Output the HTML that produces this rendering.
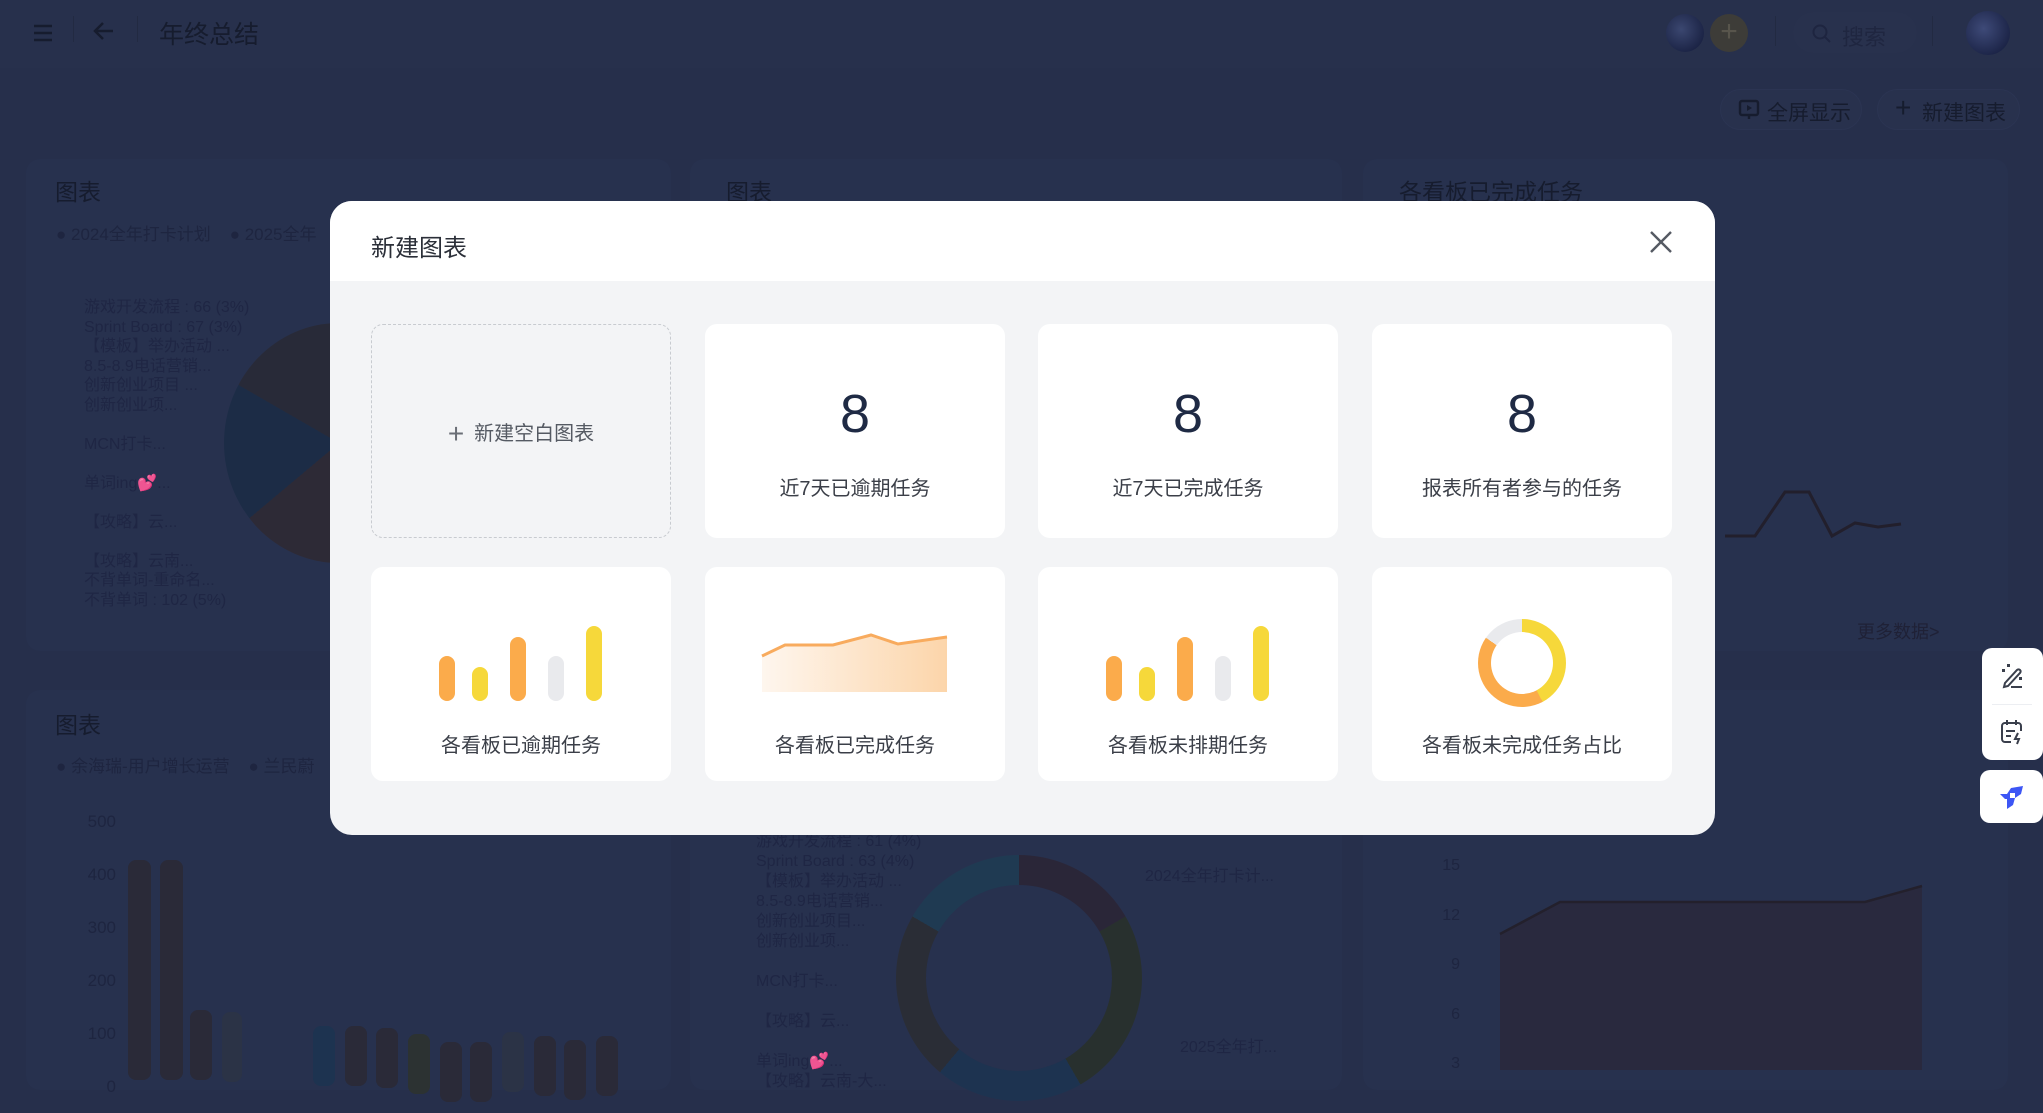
<!DOCTYPE html>
<html><head><meta charset="utf-8">
<style>
*{margin:0;padding:0;box-sizing:border-box}
body{width:2043px;height:1069px;overflow:hidden;background:#262f4b;font-family:"Liberation Sans","Noto Sans CJK SC",sans-serif;position:relative}
.a{position:absolute}
.top{left:0;top:0;width:2043px;height:68px;background:#27304c}
.dk{color:#1a2136}
.panel{background:#27314e;border-radius:14px}
.modal{left:330px;top:201px;width:1385px;height:634px;border-radius:22px;background:#f3f4f6;overflow:hidden}
.mh{left:0;top:0;width:1385px;height:80px;background:#fff}
.card{width:300px;height:214px;background:#fff;border-radius:12px}
.num{width:300px;text-align:center;top:58px;font-size:54px;color:#1f2a44;line-height:64px}
.lbl{width:300px;text-align:center;font-size:20px;color:#3b3f48;line-height:24px}
</style></head><body>
<div class="a top"></div>
<!-- topbar -->
<svg class="a" style="left:32px;top:22px" width="24" height="22"><g stroke="#161c2e" stroke-width="2.5"><line x1="2" y1="4" x2="20" y2="4"/><line x1="2" y1="11" x2="20" y2="11"/><line x1="2" y1="18" x2="20" y2="18"/></g></svg>
<div class="a" style="left:73px;top:16px;width:1px;height:26px;background:#222a42"></div>
<svg class="a" style="left:92px;top:20px" width="24" height="22"><g stroke="#161c2e" stroke-width="2.5" fill="none"><line x1="3" y1="11" x2="21" y2="11"/><polyline points="11,3 3,11 11,19"/></g></svg>
<div class="a" style="left:137px;top:16px;width:1px;height:26px;background:#222a42"></div>
<div class="a dk" style="left:159px;top:15px;font-size:25px;color:#161c2e">年终总结</div>
<div class="a" style="left:1666px;top:14px;width:38px;height:38px;border-radius:50%;background:radial-gradient(circle at 40% 40%,#3b4770,#101736)"></div>
<div class="a" style="left:1710px;top:14px;width:38px;height:38px;border-radius:50%;background:#3d3c38;color:#58554c;text-align:center;font-size:30px;line-height:36px">+</div>
<div class="a" style="left:1775px;top:16px;width:1px;height:30px;background:#222a42"></div>
<div class="a" style="left:1793px;top:12px;width:124px;height:41px;border-radius:21px;background:#28314d"></div>
<svg class="a" style="left:1812px;top:24px" width="20" height="20"><circle cx="8" cy="8" r="6.5" stroke="#1e2540" stroke-width="2" fill="none"/><line x1="13" y1="13" x2="18" y2="18" stroke="#1e2540" stroke-width="2"/></svg>
<div class="a" style="left:1842px;top:20px;font-size:22px;color:#1f2640">搜索</div>
<div class="a" style="left:1932px;top:16px;width:1px;height:30px;background:#222a42"></div>
<div class="a" style="left:1966px;top:11px;width:44px;height:44px;border-radius:50%;background:radial-gradient(circle at 40% 40%,#3e4a78,#101736)"></div>
<div class="a" style="left:1720px;top:89px;width:142px;height:41px;border-radius:21px;background:#28314d;border:1px solid #2b3452"></div>
<svg class="a" style="left:1738px;top:99px" width="22" height="22"><rect x="2" y="2" width="18" height="14" rx="2" stroke="#161c2e" stroke-width="2.4" fill="none"/><path d="M9 6 L14 9 L9 12Z" fill="#161c2e"/><line x1="11" y1="16" x2="11" y2="20" stroke="#161c2e" stroke-width="2.4"/></svg>
<div class="a" style="left:1767px;top:97px;font-size:21px;color:#161c2e">全屏显示</div>
<div class="a" style="left:1877px;top:89px;width:143px;height:41px;border-radius:21px;background:#28314d;border:1px solid #2b3452"></div>
<div class="a" style="left:1895px;top:92px;font-size:28px;color:#161c2e">+</div>
<div class="a" style="left:1922px;top:97px;font-size:21px;color:#161c2e">新建图表</div>
<!-- panels -->
<div class="a panel" style="left:26px;top:159px;width:645px;height:492px"></div>
<div class="a panel" style="left:690px;top:159px;width:652px;height:492px"></div>
<div class="a panel" style="left:1363px;top:159px;width:645px;height:492px"></div>
<div class="a panel" style="left:26px;top:690px;width:645px;height:400px"></div>
<div class="a panel" style="left:690px;top:690px;width:652px;height:400px"></div>
<div class="a panel" style="left:1363px;top:690px;width:645px;height:400px"></div>
<div class="a" style="left:55px;top:173px;font-size:23px;color:#161c2e">图表</div>
<div class="a" style="left:726px;top:173px;font-size:23px;color:#161c2e">图表</div>
<div class="a" style="left:1399px;top:173px;font-size:23px;color:#161c2e">各看板已完成任务</div>
<div class="a" style="left:55px;top:706px;font-size:23px;color:#161c2e">图表</div>
<div class="a" style="left:56px;top:220px;font-size:17px;color:#1e2540">● 2024全年打卡计划 &nbsp;&nbsp; ● 2025全年</div>
<div class="a" style="left:56px;top:752px;font-size:17px;color:#1e2540">● 余海瑞-用户增长运营 &nbsp;&nbsp; ● 兰民蔚</div>
<div class="a" style="left:84px;top:298px;font-size:16px;line-height:19.5px;color:#1f2644">游戏开发流程 : 66 (3%)<br>Sprint Board : 67 (3%)<br>【模板】举办活动 ...<br>8.5-8.9电话营销...<br>创新创业项目 ...<br>创新创业项...<br><br>MCN打卡...<br><br>单词ing💕...<br><br>【攻略】云...<br><br>【攻略】云南...<br>不背单词-重命名...<br>不背单词 : 102 (5%)</div>
<div class="a" style="left:224px;top:323px;width:230px;height:240px;border-radius:50%;background:conic-gradient(#1e2a42 0 40deg,#2b2436 40deg 80deg,#2a2438 80deg 110deg,#1f3350 110deg 150deg,#2e3a30 150deg 180deg,#2d2a36 180deg 230deg,#1c2c46 230deg 300deg,#282a38 300deg 360deg)"></div>
<!-- bottom-left bars -->
<div class="a" style="left:82px;top:795px;font-size:17px;line-height:53px;color:#1e2540;text-align:right;width:34px">500<br>400<br>300<br>200<br>100<br>0</div>
<div class="a" style="left:128px;top:860px;width:23px;height:220px;background:#2a2a38;border-radius:8px"></div>
<div class="a" style="left:160px;top:860px;width:23px;height:220px;background:#2a2a38;border-radius:8px"></div>
<div class="a" style="left:190px;top:1010px;width:22px;height:70px;background:#2a2a38;border-radius:8px"></div>
<div class="a" style="left:222px;top:1012px;width:20px;height:70px;background:#2b3346;border-radius:8px"></div>
<div class="a" style="left:313px;top:1026px;width:22px;height:60px;background:#1d3350;border-radius:8px"></div>
<div class="a" style="left:345px;top:1026px;width:22px;height:60px;background:#2a2a38;border-radius:8px"></div>
<div class="a" style="left:376px;top:1028px;width:22px;height:60px;background:#2a2a38;border-radius:8px"></div>
<div class="a" style="left:408px;top:1034px;width:22px;height:60px;background:#2c3232;border-radius:8px"></div>
<div class="a" style="left:440px;top:1042px;width:22px;height:60px;background:#2a2a38;border-radius:8px"></div>
<div class="a" style="left:470px;top:1042px;width:22px;height:60px;background:#2a2a38;border-radius:8px"></div>
<div class="a" style="left:502px;top:1032px;width:22px;height:60px;background:#2b3346;border-radius:8px"></div>
<div class="a" style="left:534px;top:1036px;width:22px;height:60px;background:#2a2a38;border-radius:8px"></div>
<div class="a" style="left:564px;top:1040px;width:22px;height:60px;background:#2a2a38;border-radius:8px"></div>
<div class="a" style="left:596px;top:1036px;width:22px;height:60px;background:#2a2a38;border-radius:8px"></div>
<!-- bottom-middle donut -->
<div class="a" style="left:896px;top:855px;width:246px;height:246px;border-radius:50%;background:conic-gradient(#2a2638 0 60deg,#28302e 60deg 150deg,#1d3350 150deg 220deg,#2a2d36 220deg 300deg,#1f3a52 300deg 360deg)"></div>
<div class="a" style="left:926px;top:885px;width:186px;height:186px;border-radius:50%;background:#27314e"></div>
<div class="a" style="left:756px;top:832px;font-size:16px;line-height:20px;color:#1f2644">游戏开发流程 : 61 (4%)<br>Sprint Board : 63 (4%)<br>【模板】举办活动 ...<br>8.5-8.9电话营销...<br>创新创业项目...<br>创新创业项...<br><br>MCN打卡...<br><br>【攻略】云...<br><br>单词ing💕...<br>【攻略】云南-大...</div>
<div class="a" style="left:1145px;top:862px;font-size:16px;color:#1f2644">2024全年打卡计...</div>
<div class="a" style="left:1180px;top:1033px;font-size:16px;color:#1f2644">2025全年打...</div>
<!-- bottom-right line area -->
<div class="a" style="left:1430px;top:841px;font-size:16px;line-height:49.5px;color:#1e2540;text-align:right;width:30px">15<br>12<br>9<br>6<br>3</div>
<svg class="a" style="left:1490px;top:870px" width="450" height="200"><polygon points="10,64 70,32 375,32 432,16 432,200 10,200" fill="#29293e"/><polyline points="10,64 70,32 375,32 432,16" fill="none" stroke="#23202c" stroke-width="2.5"/></svg>
<!-- top-right line chart remnant -->
<svg class="a" style="left:1715px;top:480px" width="240" height="60"><polyline points="10,56 40,56 70,12 94,12 117,56 140,43 163,47 186,44" fill="none" stroke="#221f2c" stroke-width="3"/></svg>
<div class="a" style="left:1857px;top:618px;font-size:18px;color:#1f2136">更多数据&gt;</div>
<!-- floating -->
<div class="a" style="left:1982px;top:648px;width:61px;height:112px;background:#fff;border-radius:10px"></div>
<div class="a" style="left:1992px;top:704px;width:40px;height:1px;background:#eceef2"></div>
<svg class="a" style="left:1998px;top:662px" width="28" height="28"><g stroke="#3a3f4c" stroke-width="2" fill="none"><path d="M7 21 L19 8 a2 2 0 0 1 3 3 L10 24 L6 25Z"/><line x1="13" y1="25" x2="24" y2="25"/></g><rect x="4" y="7" width="3" height="3" fill="#3a3f4c"/><rect x="9" y="2" width="3" height="3" fill="#3a3f4c"/><rect x="21" y="15" width="3" height="3" fill="#3a3f4c"/></svg>
<svg class="a" style="left:1998px;top:718px" width="28" height="28"><g stroke="#3a3f4c" stroke-width="2" fill="none"><path d="M13 24 H7 a3 3 0 0 1 -3 -3 V8 a3 3 0 0 1 3 -3 H20 a3 3 0 0 1 3 3 V13"/><line x1="9" y1="2" x2="9" y2="7"/><line x1="18" y1="2" x2="18" y2="7"/><line x1="8" y1="13" x2="17" y2="13"/><line x1="8" y1="18" x2="13" y2="18"/><path d="M20 15 L17 21 H21 L19 26"/></g></svg>
<div class="a" style="left:1980px;top:770px;width:63px;height:53px;background:#fff;border-radius:10px"></div>
<svg class="a" style="left:1997px;top:782px" width="30" height="30"><path d="M26 4 L14 6 L10 12 L3 12 L8 17 L10 17 L10 27 L16 23 L18 16 L24 12Z" fill="#3d56f5"/><rect x="13" y="11" width="5" height="5" fill="#fff"/></svg>
<!-- modal -->
<div class="a modal">
 <div class="a mh"></div>
 <div class="a" style="left:41px;top:27px;font-size:24px;color:#2b2f38">新建图表</div>
 <svg class="a" style="left:1319px;top:29px" width="24" height="24"><g stroke="#555a63" stroke-width="2.4"><line x1="2" y1="2" x2="22" y2="22"/><line x1="22" y1="2" x2="2" y2="22"/></g></svg>
 <div class="a card" style="left:41px;top:123px;background:#f3f4f6;border:1.5px dashed #c8cbd0"></div>
 <div class="a" style="left:41px;top:216px;width:300px;text-align:center;font-size:20px;color:#555a63"><span style="font-size:28px;vertical-align:-3px;margin-right:10px;color:#6a6e76">+</span>新建空白图表</div>
 <div class="a card" style="left:375px;top:123px"><div class="a num">8</div><div class="a lbl" style="top:153px">近7天已逾期任务</div></div>
 <div class="a card" style="left:708px;top:123px"><div class="a num">8</div><div class="a lbl" style="top:153px">近7天已完成任务</div></div>
 <div class="a card" style="left:1042px;top:123px"><div class="a num">8</div><div class="a lbl" style="top:153px">报表所有者参与的任务</div></div>
 <div class="a card" style="left:41px;top:366px">
  <svg class="a" style="left:0;top:0" width="300" height="150"><g stroke-linecap="round" stroke-width="16"><line x1="76" y1="97" x2="76" y2="126" stroke="#fbab4b"/><line x1="109" y1="108" x2="109" y2="126" stroke="#f6d83a"/><line x1="147" y1="78" x2="147" y2="126" stroke="#fbab4b"/><line x1="185" y1="97" x2="185" y2="126" stroke="#e9eaed"/><line x1="223" y1="67" x2="223" y2="126" stroke="#f6d83a"/></g></svg>
  <div class="a lbl" style="top:167px">各看板已逾期任务</div></div>
 <div class="a card" style="left:375px;top:366px">
  <svg class="a" style="left:0;top:0" width="300" height="150"><defs><linearGradient id="g" x1="0" x2="1" y1="0" y2="0"><stop offset="0" stop-color="#fef6ee"/><stop offset="1" stop-color="#fcd5aa"/></linearGradient></defs><polygon points="57,89 80,78 128,78 166,68 193,77 242,70 242,125 57,125" fill="url(#g)"/><polyline points="57,89 80,78 128,78 166,68 193,77 242,70" fill="none" stroke="#f8ab5e" stroke-width="3"/></svg>
  <div class="a lbl" style="top:167px">各看板已完成任务</div></div>
 <div class="a card" style="left:708px;top:366px">
  <svg class="a" style="left:0;top:0" width="300" height="150"><g stroke-linecap="round" stroke-width="16"><line x1="76" y1="97" x2="76" y2="126" stroke="#fbab4b"/><line x1="109" y1="108" x2="109" y2="126" stroke="#f6d83a"/><line x1="147" y1="78" x2="147" y2="126" stroke="#fbab4b"/><line x1="185" y1="97" x2="185" y2="126" stroke="#e9eaed"/><line x1="223" y1="67" x2="223" y2="126" stroke="#f6d83a"/></g></svg>
  <div class="a lbl" style="top:167px">各看板未排期任务</div></div>
 <div class="a card" style="left:1042px;top:366px">
  <div class="a" style="left:106px;top:52px;width:88px;height:88px;border-radius:50%;background:conic-gradient(#f6d83a 0 152deg,#fbab4b 152deg 305deg,#e9eaed 305deg 360deg)"></div>
  <div class="a" style="left:119px;top:65px;width:62px;height:62px;border-radius:50%;background:#fff"></div>
  <div class="a lbl" style="top:167px">各看板未完成任务占比</div></div>
</div>
</body></html>
